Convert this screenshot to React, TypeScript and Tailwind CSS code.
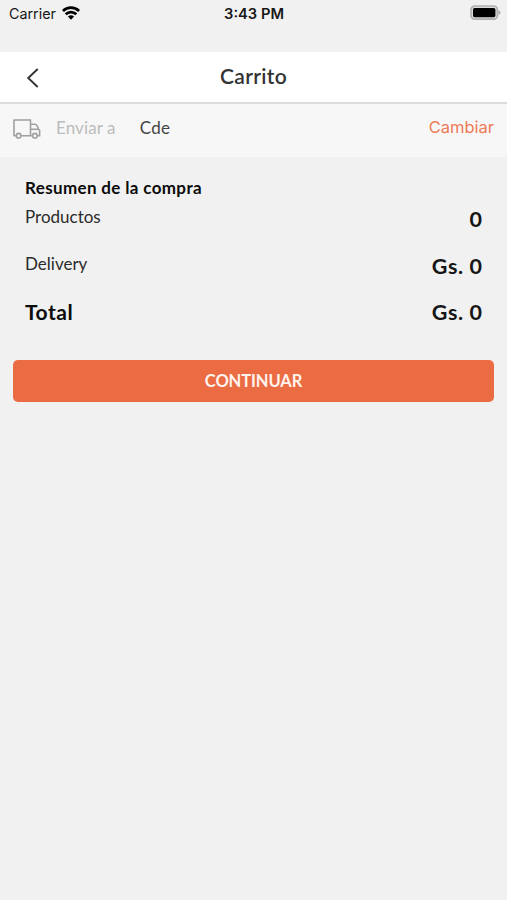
import React from "react";

function WifiIcon() {
  return (
    <svg width="18" height="14" viewBox="0 0 18 14" fill="none" stroke="#000" strokeWidth="2.7" className="mt-px block">
      <path d="M0.9 5A11.6 11.6 0 0 1 17.1 5" />
      <path d="M3.7 8.3A7.4 7.4 0 0 1 14.3 8.3" />
      <path d="M9 13.8L5.9 10.6A4.5 4.5 0 0 1 12.1 10.6Z" fill="#000" stroke="none" />
    </svg>
  );
}

function BatteryIcon() {
  return (
    <svg width="31" height="15" viewBox="0 0 31 15" className="block">
      <rect x="1" y="1" width="26.4" height="13.2" rx="3.8" fill="#dcdcdc" stroke="#b0b0b0" strokeWidth="1.7" />
      <rect x="3" y="3" width="22.4" height="9.2" rx="1.6" fill="#000" />
      <path d="M28.4 5Q30.6 6 30.6 7.5T28.4 10Z" fill="#b0b0b0" />
    </svg>
  );
}

function TruckIcon() {
  return (
    <svg width="28" height="20" viewBox="0 0 28 20" fill="none" stroke="#a0a0a0" strokeWidth="1.6" className="block">
      <path d="M3 16.7H1V1H17.5V16.7H8.2" strokeLinejoin="round" />
      <path d="M17.5 5.2H21.6Q23.4 5.2 24.2 7L25.6 10.2L26.6 11.4V16.7H24.5M19.4 16.7H17.5" />
      <path d="M17.5 10.3H25.8" />
      <circle cx="5.6" cy="16.7" r="2.3" />
      <circle cx="21.9" cy="16.7" r="2.3" />
    </svg>
  );
}

function Row({ label, value, bold }: { label: string; value: string; bold?: boolean }) {
  return (
    <div className="flex h-[46.5px] items-start justify-between">
      <span
        className={
          bold
            ? "mt-px text-[21px] leading-6 font-bold tracking-[0.5px] text-[#0c0c0c]"
            : "-mt-px text-[17px] leading-6 text-[#2b2b2b]"
        }
      >
        {label}
      </span>
      <span className="-mr-[0.6px] mt-px text-[21.5px] leading-6 font-bold tracking-[0.6px] text-[#151515]">{value}</span>
    </div>
  );
}

export default function App() {
  return (
    <main className="h-[900px] w-full overflow-hidden bg-[#f1f1f1] font-['Lato',sans-serif]">
      <div className="grid h-[52px] grid-cols-3 items-start pt-[5px] font-['Inter',sans-serif] text-[15px] leading-[18px] text-[#171717]">
        <div className="flex gap-[6px] pl-[9px] text-[14.3px]">
          <span>Carrier</span>
          <WifiIcon />
        </div>
        <span className="pl-px text-center text-[14.7px] font-semibold">3:43 PM</span>
        <div className="flex justify-end pr-[6px]">
          <BatteryIcon />
        </div>
      </div>

      <header className="grid h-[52px] grid-cols-[60px_1fr_60px] items-center border-b-2 border-[#dbdbdb] bg-white">
        <svg width="13" height="20" viewBox="0 0 13 20" fill="none" stroke="#333" strokeWidth="1.9" className="mt-px ml-[26px] block">
          <path d="M11.7 1L2.2 10L11.7 19" />
        </svg>
        <h1 className="-mt-[2px] text-center text-[21px] leading-6 font-semibold tracking-[0.3px] text-[#333]">Carrito</h1>
      </header>

      <section className="flex h-[53px] items-start bg-[#f7f7f7] px-[13px] pt-[12px] text-[17px] leading-6">
        <div className="mt-[3px]">
          <TruckIcon />
        </div>
        <span className="ml-[15px] tracking-[0.1px] text-[#bcbcbc]">Enviar a</span>
        <span className="ml-6 tracking-[0.3px] text-[#454545]">Cde</span>
        <button className="-mt-[1px] ml-auto font-['Inter',sans-serif] text-[16.5px] leading-6 text-[#ee7a56]">Cambiar</button>
      </section>

      <section className="px-[25px] pt-[19px]">
        <h2 className="mb-[6px] text-[17px] leading-6 font-bold tracking-[0.35px] text-[#0c0c0c]">Resumen de la compra</h2>
        <Row label="Productos" value="0" />
        <Row label="Delivery" value="Gs. 0" />
        <Row label="Total" value="Gs. 0" bold />
      </section>

      <div className="px-[13px] pt-[14.5px]">
        <button className="block h-[42px] w-full rounded-[5px] bg-[#eb6c43] text-[16.5px] font-bold tracking-[-0.1px] text-[#fff3ed]">CONTINUAR</button>
      </div>
    </main>
  );
}
